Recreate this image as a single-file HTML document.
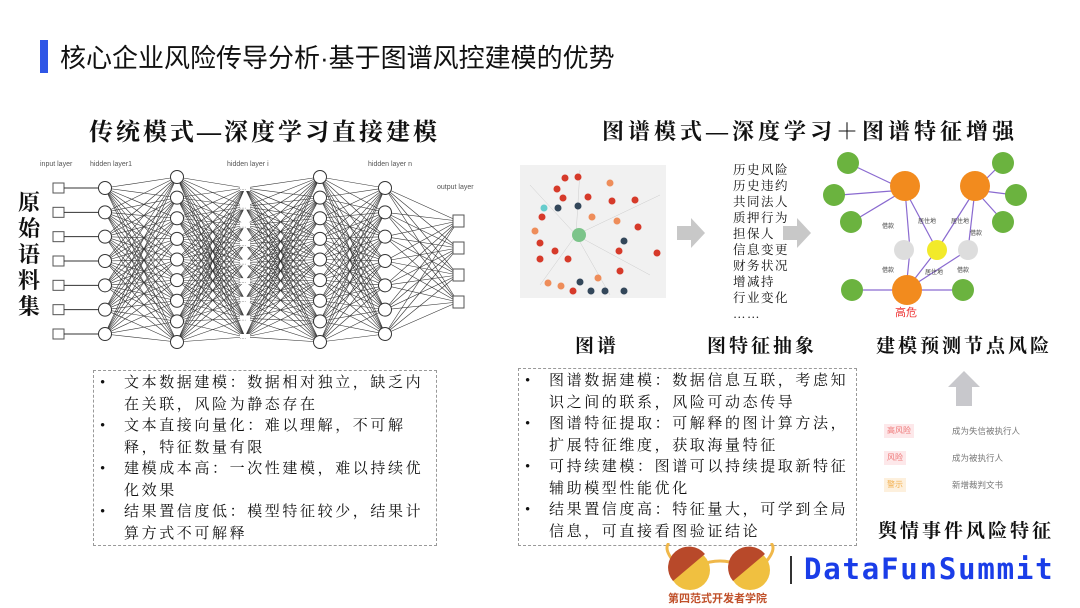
<!DOCTYPE html>
<html><head><meta charset="utf-8">
<style>
body{margin:0;width:1080px;height:608px;background:#fff;position:relative;overflow:hidden;font-family:"Liberation Serif","Noto Serif CJK SC",serif;color:#111}
.a{position:absolute;white-space:nowrap}
.sans{font-family:"Liberation Sans","Noto Sans CJK SC",sans-serif}
.box{position:absolute;border:1px dashed #999;box-sizing:border-box;padding:2px 0 0 6px;font-size:15px;line-height:21.5px;letter-spacing:2.6px}
.box div{padding-left:24px;text-indent:-24px}
.box div:before{content:"•";display:inline-block;width:24px;text-indent:0;letter-spacing:0}
.lbl{font-size:19px;font-weight:bold;letter-spacing:3px}
</style></head><body>
<div class="a" style="left:40px;top:40px;width:8px;height:33px;background:#2f56e6"></div>
<div class="a sans" style="left:60px;top:38px;font-size:26px;color:#111">核心企业风险传导分析·基于图谱风控建模的优势</div>
<div class="a" style="left:89px;top:112px;font-size:24px;font-weight:bold;letter-spacing:3px">传统模式—深度学习直接建模</div>
<div class="a" style="left:602px;top:115px;font-size:22px;font-weight:bold;letter-spacing:4px">图谱模式—深度学习＋图谱特征增强</div>
<div class="a" style="left:18px;top:190px;font-size:22px;line-height:26px;width:24px;white-space:normal;font-weight:bold">原始语料集</div>
<svg class="a" style="left:0;top:0" width="520" height="360" id="nn">
<g font-family="Liberation Sans" font-size="7" fill="#555">
<text x="40" y="166">input layer</text><text x="90" y="166">hidden layer1</text><text x="227" y="166">hidden layer i</text><text x="368" y="166">hidden layer n</text><text x="437" y="189">output layer</text></g>
</svg>
<script>
(function(){var s=document.getElementById('nn');
function L(n,y0,y1){var a=[];for(var i=0;i<n;i++)a.push(y0+(y1-y0)*i/(n-1));return a}
var layers=[[105,L(7,188,334)],[177,L(9,177,342)],[245,L(9,188,337)],[320,L(9,177,342)],[385,L(7,188,334)],[458,L(4,221,302)]];
var h='';
for(var k=0;k<layers.length-1;k++){var A=layers[k],B=layers[k+1];
 A[1].forEach(function(ya){B[1].forEach(function(yb){h+='<line x1="'+A[0]+'" y1="'+ya+'" x2="'+B[0]+'" y2="'+yb+'" stroke="#333" stroke-width="0.6"/>'})})}
var ins=L(7,188,334);ins.forEach(function(y){h+='<rect x="53" y="'+(y-5)+'" width="11" height="10" fill="#fff" stroke="#555"/><line x1="64" y1="'+y+'" x2="99" y2="'+y+'" stroke="#333"/>'});
layers.forEach(function(l,k){l[1].forEach(function(y){
 if(k==2)h+='<rect x="240" y="'+(y-3)+'" width="10" height="6" fill="#fff"/><text x="240" y="'+(y+2)+'" font-size="6" fill="#666">....</text>';
 else if(k==5)h+='<rect x="453" y="'+(y-6)+'" width="11" height="12" fill="#fff" stroke="#555"/>';
 else h+='<circle cx="'+l[0]+'" cy="'+y+'" r="6.5" fill="#fff" stroke="#333"/>'})});
s.insertAdjacentHTML('beforeend',h)})();
</script>
<div class="box" style="left:93px;top:370px;width:344px;height:176px">
<div>文本数据建模：数据相对独立，缺乏内在关联，风险为静态存在</div>
<div>文本直接向量化：难以理解，不可解释，特征数量有限</div>
<div>建模成本高：一次性建模，难以持续优化效果</div>
<div>结果置信度低：模型特征较少，结果计算方式不可解释</div>
</div>
<div class="box" style="left:518px;top:368px;width:339px;height:178px">
<div>图谱数据建模：数据信息互联，考虑知识之间的联系，风险可动态传导</div>
<div>图谱特征提取：可解释的图计算方法，扩展特征维度，获取海量特征</div>
<div>可持续建模：图谱可以持续提取新特征辅助模型性能优化</div>
<div>结果置信度高：特征量大，可学到全局信息，可直接看图验证结论</div>
</div>
<svg class="a" style="left:520px;top:165px" width="146" height="133">
<rect width="146" height="133" fill="#f1f1f1"/>
<g stroke="#ccc" stroke-width="0.5">
<line x1="56" y1="70" x2="10" y2="20"/><line x1="56" y1="70" x2="140" y2="30"/><line x1="56" y1="70" x2="20" y2="120"/><line x1="56" y1="70" x2="130" y2="110"/><line x1="56" y1="70" x2="60" y2="5"/><line x1="56" y1="70" x2="90" y2="130"/></g>
<g fill="#d63a2a"><circle cx="45" cy="13" r="3.5"/><circle cx="58" cy="12" r="3.5"/><circle cx="37" cy="24" r="3.5"/><circle cx="43" cy="33" r="3.5"/><circle cx="68" cy="32" r="3.5"/><circle cx="92" cy="36" r="3.5"/><circle cx="115" cy="35" r="3.5"/><circle cx="22" cy="52" r="3.5"/><circle cx="118" cy="62" r="3.5"/><circle cx="20" cy="78" r="3.5"/><circle cx="35" cy="86" r="3.5"/><circle cx="20" cy="94" r="3.5"/><circle cx="48" cy="94" r="3.5"/><circle cx="99" cy="86" r="3.5"/><circle cx="137" cy="88" r="3.5"/><circle cx="100" cy="106" r="3.5"/><circle cx="53" cy="126" r="3.5"/></g>
<g fill="#ee8d5a"><circle cx="90" cy="18" r="3.5"/><circle cx="72" cy="52" r="3.5"/><circle cx="97" cy="56" r="3.5"/><circle cx="15" cy="66" r="3.5"/><circle cx="78" cy="113" r="3.5"/><circle cx="28" cy="118" r="3.5"/><circle cx="41" cy="121" r="3.5"/></g>
<g fill="#33475a"><circle cx="38" cy="43" r="3.5"/><circle cx="58" cy="41" r="3.5"/><circle cx="104" cy="76" r="3.5"/><circle cx="60" cy="117" r="3.5"/><circle cx="85" cy="126" r="3.5"/><circle cx="104" cy="126" r="3.5"/><circle cx="71" cy="126" r="3.5"/></g>
<circle cx="24" cy="43" r="3.5" fill="#6cc"/><circle cx="59" cy="70" r="7" fill="#7cc48a"/>
</svg>
<svg class="a" style="left:677px;top:218px" width="140" height="30"><polygon points="0,8 14,8 14,0 28,15 14,30 14,22 0,22" fill="#c8c8c8"/><polygon points="106,8 120,8 120,0 134,15 120,30 120,22 106,22" fill="#c8c8c8"/></svg>
<div class="a" style="left:733px;top:162px;font-size:12.5px;line-height:16px;letter-spacing:1.5px;white-space:normal;width:70px">历史风险<br>历史违约<br>共同法人<br>质押行为<br>担保人<br>信息变更<br>财务状况<br>增减持<br>行业变化<br>……</div>
<svg class="a" style="left:820px;top:150px" width="250" height="170">
<g stroke="#8a6ad0" stroke-width="1.2">
<line x1="85" y1="40" x2="28" y2="13"/><line x1="85" y1="40" x2="20" y2="45"/><line x1="85" y1="40" x2="35" y2="70"/><line x1="85" y1="40" x2="90" y2="100"/><line x1="85" y1="40" x2="117" y2="100"/>
<line x1="155" y1="40" x2="182" y2="13"/><line x1="155" y1="40" x2="195" y2="45"/><line x1="155" y1="40" x2="182" y2="70"/><line x1="155" y1="40" x2="117" y2="100"/><line x1="155" y1="40" x2="148" y2="100"/>
<line x1="86" y1="140" x2="90" y2="100"/><line x1="86" y1="140" x2="117" y2="100"/><line x1="86" y1="140" x2="148" y2="100"/><line x1="86" y1="140" x2="25" y2="140"/><line x1="86" y1="140" x2="150" y2="140"/></g>
<g fill="#6bb33f"><circle cx="28" cy="13" r="11"/><circle cx="14" cy="45" r="11"/><circle cx="31" cy="72" r="11"/><circle cx="183" cy="13" r="11"/><circle cx="196" cy="45" r="11"/><circle cx="183" cy="72" r="11"/><circle cx="32" cy="140" r="11"/><circle cx="143" cy="140" r="11"/></g>
<g fill="#f28b1e"><circle cx="85" cy="36" r="15"/><circle cx="155" cy="36" r="15"/><circle cx="87" cy="140" r="15"/></g>
<g fill="#ddd"><circle cx="84" cy="100" r="10"/><circle cx="148" cy="100" r="10"/></g><circle cx="117" cy="100" r="10" fill="#f2ea2a"/>
<g font-family="Liberation Sans,Noto Sans CJK SC" font-size="6" fill="#444"><text x="62" y="78">借款</text><text x="98" y="73">居住地</text><text x="131" y="73">居住地</text><text x="150" y="85">借款</text><text x="62" y="122">借款</text><text x="105" y="124">居住地</text><text x="137" y="122">借款</text></g>
<text x="75" y="166" font-family="Liberation Sans,Noto Sans CJK SC" font-size="11" fill="#e33">高危</text>
</svg>
<div class="a lbl" style="left:575px;top:331px">图谱</div>
<div class="a lbl" style="left:707px;top:331px">图特征抽象</div>
<div class="a lbl" style="left:876px;top:331px">建模预测节点风险</div>
<svg class="a" style="left:948px;top:371px" width="32" height="36"><polygon points="16,0 32,16 24,16 24,35 8,35 8,16 0,16" fill="#c8c8cc"/></svg>
<div class="a sans" style="left:884px;top:424px;font-size:8px;line-height:14px;background:#fde8ea;color:#e77;padding:0 3px">高风险</div>
<div class="a sans" style="left:952px;top:424px;font-size:8.5px;color:#777;line-height:14px">成为失信被执行人</div>
<div class="a sans" style="left:884px;top:451px;font-size:8px;line-height:14px;background:#fde8ea;color:#e77;padding:0 3px">风险</div>
<div class="a sans" style="left:952px;top:451px;font-size:8.5px;color:#777;line-height:14px">成为被执行人</div>
<div class="a sans" style="left:884px;top:478px;font-size:8px;line-height:14px;background:#fdf0dd;color:#f2b050;padding:0 3px">警示</div>
<div class="a sans" style="left:952px;top:478px;font-size:8.5px;color:#777;line-height:14px">新增裁判文书</div>
<div class="a lbl" style="left:878px;top:516px">舆情事件风险特征</div>
<svg class="a" style="left:655px;top:543px" width="125" height="52">
<path d="M20 20 Q8 6 14 0 M110 20 Q122 6 116 0 M45 22 Q65 14 85 22" stroke="#f0b84a" stroke-width="3" fill="none"/>
<circle cx="35" cy="27" r="20" fill="#f0c040"/><circle cx="95" cy="27" r="20" fill="#f0c040"/>
<path d="M18 38 A20 20 0 0 1 50 11 Z" fill="#b8492a"/><path d="M78 38 A20 20 0 0 1 110 11 Z" fill="#b8492a"/>
</svg>
<div class="a sans" style="left:668px;top:590px;font-size:11px;color:#c0502a;font-weight:bold">第四范式开发者学院</div>
<div class="a" style="left:790px;top:556px;width:2px;height:28px;background:#333"></div>
<div class="a" style="left:804px;top:552px;font-family:'DejaVu Sans Mono','Liberation Mono',monospace;font-weight:bold;font-size:29px;color:#1a3de8;letter-spacing:1.8px">DataFunSummit</div>
</body></html>
